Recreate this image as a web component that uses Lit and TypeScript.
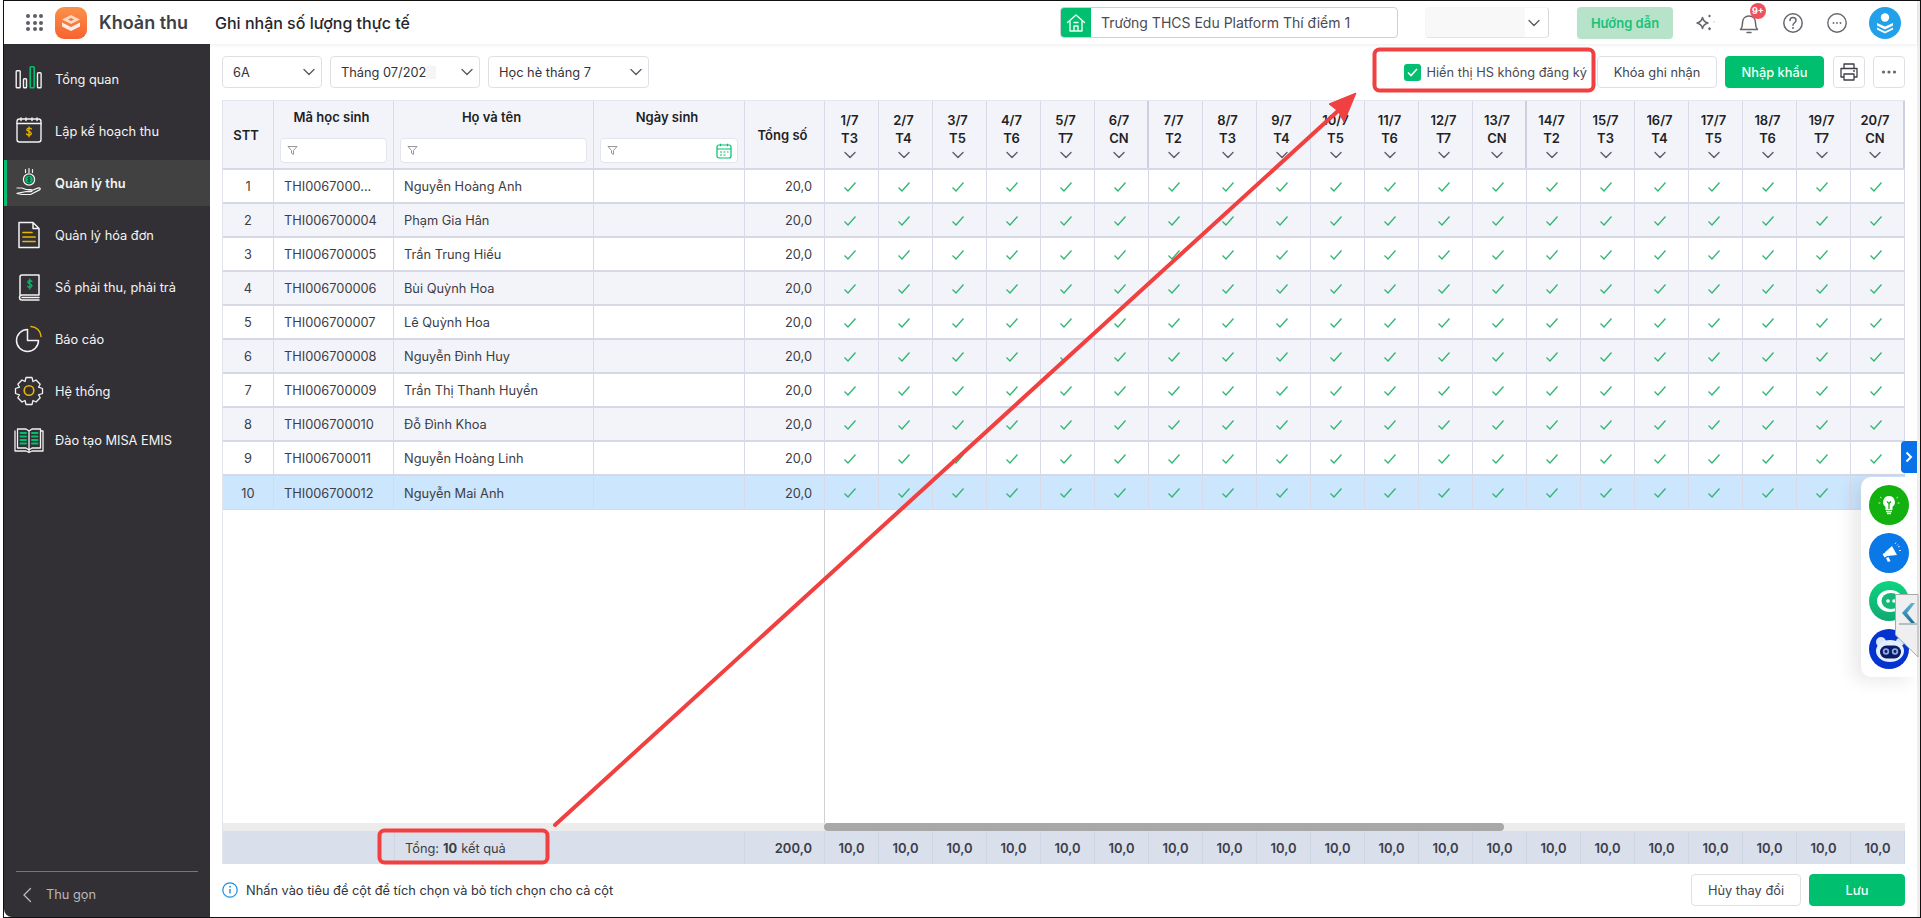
import { LitElement, html, css, svg } from 'lit';
import { customElement } from 'lit/decorators.js';

const WHITE = '#f2f2f2';
const GREEN = '#00bf6f';
const YELLOW = '#e9b500';

const stroke = (d: string, color = WHITE, w = 1.5) =>
  svg`<path d=${d} fill="none" stroke=${color} stroke-width=${w} stroke-linecap="round" stroke-linejoin="round"/>`;

const menu = [
  {
    label: 'Tổng quan',
    icon: svg`
      <rect x="3.2" y="7.7" width="4" height="17" rx=".8" fill="none" stroke=${WHITE} stroke-width="1.4"/>
      <rect x="10.500" y="15.7" width="3" height="9" rx=".8" fill="none" stroke=${WHITE} stroke-width="1.4"/>
      <rect x="17.200" y="3.7" width="4" height="21" rx=".8" fill="none" stroke=${GREEN} stroke-width="1.6"/>
      <rect x="24.500" y="9.7" width="3.6" height="15" rx=".8" fill="none" stroke=${WHITE} stroke-width="1.4"/>`,
  },
  {
    label: 'Lập kế hoạch thu',
    icon: svg`
      <rect x="4" y="4" width="24" height="23" rx="2.5" fill="none" stroke=${WHITE} stroke-width="1.4"/>
      ${stroke('M4 8.5H28M8 3v2.5M13 3v2.5M19 3v2.5M24 3v2.5')}
      ${stroke('M18.5 14c-.6-1-3.8-1.6-4.6.2-.9 2.3 4.6 2 4.4 4.4-.2 1.8-3.6 1.8-4.8.4M16 11.8v10', YELLOW, 1.3)}`,
  },
  {
    label: 'Quản lý thu',
    active: true,
    icon: svg`
      ${stroke('M12.5 2.5v3M16 1.5v4M19.5 2.5v3', WHITE, 1.2)}
      <circle cx="16" cy="12.5" r="5.6" fill="none" stroke=${WHITE} stroke-width="1.3"/>
      <circle cx="16" cy="12.5" r="3.8" fill=${GREEN}/>
      ${stroke('M17.300 11c-.4-.7-2.500-.8-2.600.4-.1 1.300 2.700 1 2.600 2.300-.1 1-2.200 1-2.800.2M16 9.800v5.400', '#1c3a2c', .9)}
      ${stroke('M4 21h5l4 1.5h5c1.5 0 1.5 2.2 0 2.2h-4M18.5 23.5l7-2.6c1.8-.4 2.4 1.2 1 2l-9 4.6H9l-5-1.2z', WHITE, 1.2)}`,
  },
  {
    label: 'Quản lý hóa đơn',
    icon: svg`
      ${stroke('M6 3.5h14l6 6v19H6zM20 3.5v6h6')}
      ${stroke('M10 13.5h9M10 18h12M10 22.5h12', YELLOW, 1.7)}`,
  },
  {
    label: 'Sổ phải thu, phải trả',
    icon: svg`
      ${stroke('M7 24V6a2 2 0 0 1 2-2h17v20H9a2.5 2.5 0 0 0 0 5h17M9 26.5h17')}
      ${stroke('M19 10.5c-.5-1-3.8-1.4-4.2.3-.5 2.2 4.4 1.8 4.2 4.2-.2 1.6-3.4 1.6-4.4.3M16.8 8v10', GREEN, 1.3)}`,
  },
  {
    label: 'Báo cáo',
    icon: svg`
      ${stroke('M14.5 6.5a11 11 0 1 0 11 11h-11z', WHITE, 1.5)}
      ${stroke('M18 3.5a10.5 10.5 0 0 1 10 10', YELLOW, 1.5)}`,
  },
  {
    label: 'Hệ thống',
    icon: svg`
      <path d="M13 2.5h6l1 4 3-1.5 4.200 4.200-1.700 3 4 1.300v5l-4 1.300 1.700 3-4.200 4.200-3-1.500-1 4h-6l-1-4-3 1.500-4.200-4.200 1.700-3-4-1.300v-5l4-1.300-1.700-3 4.200-4.200 3 1.500z" fill="none" stroke=${WHITE} stroke-width="1.3" stroke-linejoin="round"/>
      <circle cx="16" cy="15.500" r="4.800" fill="none" stroke=${YELLOW} stroke-width="1.600"/>`,
  },
  {
    label: 'Đào tạo MISA EMIS',
    last: true,
    icon: svg`
      ${stroke('M2 7v20h11l3 1.500 3-1.500h11V7h-2M16 7v21M4.500 5v19H13l3 2 3-2h8.500V5H19l-3 2-3-2z', WHITE, 1.300)}
      ${stroke('M7.500 9h5.500M7.500 12.500h5.500M7.500 16h5.500M7.500 19.500h5.500M19 9h5.500M19 12.500h5.500M19 16h5.500M19 19.500h5.500', GREEN, 2)}`,
  },
];

const students = [
  ['THI0067000...', 'Nguyễn Hoàng Anh'],
  ['THI006700004', 'Phạm Gia Hân'],
  ['THI006700005', 'Trần Trung Hiếu'],
  ['THI006700006', 'Bùi Quỳnh Hoa'],
  ['THI006700007', 'Lê Quỳnh Hoa'],
  ['THI006700008', 'Nguyễn Đình Huy'],
  ['THI006700009', 'Trần Thị Thanh Huyền'],
  ['THI006700010', 'Đỗ Đình Khoa'],
  ['THI006700011', 'Nguyễn Hoàng Linh'],
  ['THI006700012', 'Nguyễn Mai Anh'],
];

const weekdays = ['T3', 'T4', 'T5', 'T6', 'T7', 'CN', 'T2'];
const days = Array.from({ length: 20 }, (_, i) => ({
  date: `${i + 1}/7`,
  weekday: weekdays[i % 7],
}));

const chevron = html`<svg class="chev" width="12" height="8" viewBox="0 0 12 8"><path d="M1 1.500l5 5 5-5" fill="none" stroke="#5c5c66" stroke-width="1.400" stroke-linecap="round" stroke-linejoin="round"/></svg>`;
const funnel = html`<svg width="11" height="11" viewBox="0 0 11 11"><path d="M1 1.500h9L6.500 5.500v4l-2-1.300V5.500z" fill="none" stroke="#8b8b95" stroke-width=".9" stroke-linejoin="round"/></svg>`;
const tick = html`<svg width="14" height="12" viewBox="0 0 14 12"><path d="M1.500 6.500L5 10l7.500-8.500" fill="none" stroke="#30b673" stroke-width="1.300"/></svg>`;

@customElement('app-root')
export class AppRoot extends LitElement {
  static styles = css`
    :host {
      display: block;
      position: relative;
      width: 1921px;
      height: 918px;
      overflow: hidden;
      background: #fff;
      font-family: Inter, 'Noto Sans', sans-serif;
      font-size: 12.8px;
      color: #3d3d45;
    }
    * { box-sizing: border-box; }

    .window {
      height: 918px;
      margin-left: 3px;
      display: flex;
      flex-direction: column;
      border: 1px solid #111;
    }
    .window-inner {
      flex: 1;
      display: flex;
      flex-direction: column;
      min-height: 0;
      border-right: 3px solid #eeeeee;
    }

    /* header */
    .header {
      height: 43px;
      flex: none;
      display: flex;
      align-items: center;
      padding: 0 16px 0 22px;
      background: #fff;
      box-shadow: 0 1px 4px rgba(0, 0, 0, .08);
      position: relative;
    }
    .apps { display: grid; grid-template-columns: repeat(3, 4px); gap: 2.500px; margin-right: 12px; }
    .apps i { width: 4px; height: 4px; border-radius: 50%; background: #5e5e66; }
    .logo { width: 32px; height: 32px; margin-right: 12px; }
    .app-name { font-size: 18px; font-weight: 600; color: #3f3f46; width: 116px; }
    .page-title { font-size: 16px; font-weight: 500; color: #26262c; }
    .spacer { flex: 1; }
    .branch {
      width: 338px;
      height: 31px;
      display: flex;
      align-items: center;
      border: 1px solid #cfcfd4;
      border-radius: 4px;
      overflow: hidden;
      margin-right: 27px;
      font-size: 14px;
      color: #4a4a52;
    }
    .branch .house {
      width: 31px;
      height: 31px;
      background: #00bf6f;
      display: flex;
      align-items: center;
      justify-content: center;
      margin: -1px 10px -1px -1px;
    }
    .year {
      width: 124px;
      height: 31px;
      border: 1px solid;
      border-color: #f6f6f6 #d6d6da #e4e4e7 #f6f6f6;
      border-radius: 4px;
      margin-right: 28px;
      display: flex;
      align-items: center;
      overflow: hidden;
    }
    .year .blur { width: 99px; height: 100%; background: #f8f8f8; }
    .year .chev { margin-left: 3px; }
    .guide {
      width: 96px;
      height: 32px;
      border-radius: 4px;
      background: #b6e3ca;
      color: #1cc177;
      font-size: 13px;
      font-weight: 600;
      display: flex;
      align-items: center;
      justify-content: center;
      margin-right: 20px;
    }
    .tools { display: flex; gap: 20px; align-items: center; }
    .tool { width: 24px; height: 24px; position: relative; display: block; }
    .badge {
      position: absolute;
      top: -8px;
      left: 13px;
      width: 16px;
      height: 16px;
      border-radius: 50%;
      background: #f0505a;
      color: #fff;
      font-size: 9px;
      font-weight: 700;
      line-height: 15px;
      text-align: center;
    }
    .avatar { width: 32px; height: 32px; margin-left: 20px; }

    /* main */
    .main { flex: 1; display: flex; min-height: 0; }
    .side {
      width: 206px;
      flex: none;
      background: #323034;
      border-bottom-left-radius: 8px;
      padding: 12px 0 0;
      display: flex;
      flex-direction: column;
      gap: 6px;
    }
    .item {
      height: 46px;
      display: flex;
      align-items: center;
      gap: 10px;
      padding-left: 9px;
      color: #f4f4f4;
    }
    .item.active {
      background: #414141;
      box-shadow: inset 3px 0 0 #00bf6f;
      font-weight: 600;
    }
    .item.last { margin-top: -3px; }
    .collapse {
      margin: auto 12px 0;
      height: 46px;
      border-top: 1px solid #77767a;
      display: flex;
      align-items: center;
      gap: 14px;
      padding-left: 6px;
      color: #b9b8bb;
    }

    .content {
      flex: 1;
      min-width: 0;
      padding: 12px 12px 11px;
      display: flex;
      flex-direction: column;
    }
    .toolbar { height: 32px; display: flex; align-items: center; flex: none; gap: 8px; margin-bottom: 12px; }
    .select {
      height: 32px;
      border: 1px solid #dfe0e6;
      border-radius: 4px;
      display: flex;
      align-items: center;
      justify-content: space-between;
      padding: 0 6px 0 10px;
      background: #fff;
      color: #33333a;
    }
    .s1 { width: 100px; }
    .s2 { width: 150px; }
    .s3 { width: 161px; }
    .month i { display: inline-block; width: 10px; height: 13px; background: #f5f5f5; vertical-align: -2px; }
    .check { margin-left: auto; display: flex; align-items: center; gap: 5px; margin-right: 2px; color: #4a4a52; }
    .box {
      width: 17px;
      height: 17px;
      background: #00bf6f;
      border-radius: 3px;
      display: flex;
      align-items: center;
      justify-content: center;
    }
    .btn {
      height: 32px;
      border: 1px solid #dfe0e6;
      border-radius: 4px;
      background: #fff;
      display: flex;
      align-items: center;
      justify-content: center;
      color: #44444c;
    }
    .btn.primary { background: #00bf6f; border-color: #00bf6f; color: #f3fff9; font-weight: 500; }
    .lock { width: 120px; }
    .import { width: 99px; margin-right: 1px; }
    .square { width: 32px; }

    /* table */
    .table { flex: 1; min-height: 0; display: flex; flex-direction: column; border-left: 1px solid #e2e4ec; }
    .grid {
      display: grid;
      grid-template-columns: 51px 120px 200px 151px 80px repeat(20, 54px);
    }
    .head { height: 70px; flex: none; background: #f3f4f9; border-top: 1px solid #e4e5ee; border-bottom: 2px solid #d6d8e6; }
    .hc {
      border-right: 1px solid #d8dae8;
      display: flex;
      flex-direction: column;
      align-items: center;
      font-size: 13px;
      font-weight: 600;
      color: #1f1f25;
      padding-top: 7px;
      line-height: 18px;
    }
    .hc > span { margin-right: 4px; }
    .hc.mid { justify-content: center; padding-top: 0; }
    .hc.sunday { border-right: 2px solid #cdd0e0; }
    .hc .chev { margin: 4px 4px 0 0; }
    .filter {
      width: calc(100% - 12px);
      height: 25px;
      margin-top: 12px;
      background: #fff;
      border: 1px solid #e4e5ec;
      border-radius: 4px;
      display: flex;
      align-items: center;
      justify-content: space-between;
      padding: 0 5px 0 6px;
    }
    .hc.day { padding-top: 10px; }
    .row { height: 34px; flex: none; border-bottom: 2px solid #d6d8e6; background: #fff; }
    .row.odd { background: #f3f4f9; }
    .row.selected { background: #cce6fd; border-bottom: 1px solid #d3dcea; }
    .cell {
      border-right: 1px solid #d8dae8;
      display: flex;
      align-items: center;
      padding: 1px 10px 0;
      overflow: hidden;
      white-space: nowrap;
    }
    .center { justify-content: center; padding: 1px 0 0; }
    .row .tick { padding-right: 4px; }
    .right { justify-content: flex-end; padding-right: 12px; }
    .filler { flex: 1; min-height: 0; }
    .filler div { width: 602px; height: 100%; border-right: 1px solid #cfcfd4; }
    .scroll { height: 8px; flex: none; display: flex; background: #ececec; }
    .scroll i { display: block; width: 680px; margin-left: 601px; border-radius: 4px; background: #a8a8a8; }
    .foot { height: 33px; flex: none; background: #d9e0ec; font-size: 13px; font-weight: 600; color: #3d3d45; }
    .foot .cell { border-right: 1px solid #cfd7e5; }
    .foot .wide { grid-column: span 2; border-right: none; }
    .foot .total { grid-column: span 2; font-size: 12.8px; font-weight: 400; border-left: 1px solid #cfd7e5; gap: 4px; }
    .foot .total b { font-weight: 700; }

    .bottom { height: 32px; margin-top: 10px; flex: none; display: flex; align-items: center; gap: 8px; }
    .bottom .note { color: #33333a; display: flex; align-items: center; gap: 8px; margin-right: auto; }
    .cancel { width: 110px; }
    .save { width: 96px; }

    /* float widgets */
    .tab {
      position: absolute;
      left: 1901px;
      top: 441px;
      width: 16px;
      height: 32px;
      background: #0a72e8;
      border-radius: 4px 0 0 4px;
      display: flex;
      align-items: center;
      justify-content: center;
    }
    .dock {
      position: absolute;
      left: 1861px;
      top: 477px;
      width: 56px;
      height: 200px;
      background: #fff;
      border-radius: 10px 0 0 10px;
      box-shadow: -8px 4px 18px rgba(0, 0, 0, .09);
      display: flex;
      flex-direction: column;
      align-items: center;
      gap: 8px;
      padding-top: 8px;
    }
    .dock svg { display: block; }
    .peel { position: absolute; left: 1895px; top: 594px; }
    .marks { position: absolute; left: 0; top: 0; pointer-events: none; }
  `;

  render() {
    return html`
      <div class="window"><div class="window-inner">
        <header class="header">
          <div class="apps">${Array.from({ length: 9 }, () => html`<i></i>`)}</div>
          <svg class="logo" viewBox="0 0 32 32">
            <defs><linearGradient id="lg" x1="0" y1="0" x2="0" y2="1"><stop offset="0" stop-color="#f9924a"/><stop offset="1" stop-color="#f9622f"/></linearGradient></defs>
            <rect width="32" height="32" rx="9" fill="url(#lg)"/>
            <path d="M16 8l9 4.500-9 4.500-9-4.500z" fill="#fbd9c1"/>
            <path d="M7 15.500l9 4.500 9-4.500v4l-9 4.500-9-4.500z" fill="#fff" opacity=".88"/>
            <path d="M13 12.500l3-1.500 3 1.500-3 1.500z" fill="#f9713a"/>
          </svg>
          <div class="app-name">Khoản thu</div>
          <div class="page-title">Ghi nhận số lượng thực tế</div>
          <div class="spacer"></div>
          <div class="branch">
            <span class="house">
              <svg width="20" height="20" viewBox="0 0 20 20"><path d="M1.500 9.500L10 2l8.500 7.500M4 8v10h12V8M8 18v-5h4v5M8 9.500h4" fill="none" stroke="#eafff4" stroke-width="1.400" stroke-linejoin="round" stroke-linecap="round"/></svg>
            </span>
            Trường THCS Edu Platform Thí điểm 1
          </div>
          <div class="year"><span class="blur"></span>${chevron}</div>
          <div class="guide">Hướng dẫn</div>
          <div class="tools">
            <svg class="tool" viewBox="0 0 24 24">
              <path d="M9.500 6.500c.8 3.500 2 4.700 5.500 5.500-3.500.8-4.700 2-5.500 5.500C8.700 14 7.500 12.800 4 12c3.500-.8 4.700-2 5.500-5.500z" fill="none" stroke="#66666e" stroke-width="1.500" stroke-linejoin="round"/>
              <path d="M16.500 3.500l1.500 1.500-1.500 1.500L15 5zM16.500 16l1.700 1.700-1.700 1.700-1.700-1.700z" fill="#66666e"/>
              <circle cx="21" cy="11" r=".7" fill="#bbb"/>
            </svg>
            <span class="tool">
              <svg width="24" height="24" viewBox="0 0 24 24"><path d="M3.500 18.500c1.500-1.500 2-3 2-6.500 0-4 2.500-7 6.500-7s6.500 3 6.500 7c0 3.500.5 5 2 6.500zM10 21.500h4" fill="none" stroke="#66666e" stroke-width="1.500" stroke-linejoin="round" stroke-linecap="round"/></svg>
              <span class="badge">9+</span>
            </span>
            <svg class="tool" viewBox="0 0 24 24">
              <circle cx="12" cy="12" r="9.200" fill="none" stroke="#66666e" stroke-width="1.500"/>
              <path d="M9 9.500c0-4 6-4 6 0 0 2.300-3 2.300-3 4.800" fill="none" stroke="#66666e" stroke-width="1.500" stroke-linecap="round"/>
              <circle cx="12" cy="17" r="1" fill="#66666e"/>
            </svg>
            <svg class="tool" viewBox="0 0 24 24">
              <circle cx="12" cy="12" r="9.200" fill="none" stroke="#66666e" stroke-width="1.400"/>
              <circle cx="8.500" cy="12" r=".9" fill="#66666e"/><circle cx="12" cy="12" r=".9" fill="#66666e"/><circle cx="15.500" cy="12" r=".9" fill="#66666e"/>
            </svg>
          </div>
          <svg class="avatar" viewBox="0 0 32 32">
            <circle cx="16" cy="16" r="16" fill="#22a0ea"/>
            <circle cx="16" cy="10.500" r="4.200" fill="#fff"/>
            <path d="M8 16l8 3.500 8-3.500v2.500l-8 4-8-4zM8 20.500l8 4 8-4v2l-8 4-8-4z" fill="#fff"/>
          </svg>
        </header>

        <div class="main">
          <nav class="side">
            ${menu.map(
              (m) => html`
                <div class="item ${m.active ? 'active' : ''} ${m.last ? 'last' : ''}">
                  <svg width="32" height="32" viewBox="0 0 32 32">${m.icon}</svg>
                  <span>${m.label}</span>
                </div>`
            )}
            <div class="collapse">
              <svg width="10" height="16" viewBox="0 0 10 16"><path d="M8.500 1.500L2 8l6.500 6.500" fill="none" stroke="#b9b8bb" stroke-width="1.300" stroke-linecap="round"/></svg>
              Thu gọn
            </div>
          </nav>

          <section class="content">
            <div class="toolbar">
              <div class="select s1"><span>6A</span>${chevron}</div>
              <div class="select s2"><span class="month">Tháng 07/202<i></i></span>${chevron}</div>
              <div class="select s3"><span>Học hè tháng 7</span>${chevron}</div>
              <div class="check">
                <span class="box"><svg width="11" height="9" viewBox="0 0 11 9"><path d="M1 4.500l3 3 6-6.500" fill="none" stroke="#fff" stroke-width="1.600"/></svg></span>
                Hiển thị HS không đăng ký
              </div>
              <div class="btn lock">Khóa ghi nhận</div>
              <div class="btn primary import">Nhập khẩu</div>
              <div class="btn square">
                <svg width="20" height="20" viewBox="0 0 20 20"><path d="M5 6.500V2h10v4.500M5 15H2V6.500h16V15h-3M5 12h10v6H5z" fill="none" stroke="#3d3d45" stroke-width="1.300" stroke-linejoin="round"/><circle cx="15" cy="9" r=".9" fill="#3d3d45"/></svg>
              </div>
              <div class="btn square">
                <svg width="16" height="6" viewBox="0 0 16 6"><circle cx="2.500" cy="3" r="1.600" fill="#66666e"/><circle cx="8" cy="3" r="1.600" fill="#66666e"/><circle cx="13.500" cy="3" r="1.600" fill="#66666e"/></svg>
              </div>
            </div>

            <div class="table">
              <div class="grid head">
                <div class="hc mid"><span>STT</span></div>
                <div class="hc"><span>Mã học sinh</span><div class="filter">${funnel}</div></div>
                <div class="hc"><span>Họ và tên</span><div class="filter">${funnel}</div></div>
                <div class="hc"><span>Ngày sinh</span>
                  <div class="filter">
                    ${funnel}
                    <svg width="16" height="16" viewBox="0 0 16 16"><rect x="1" y="2" width="14" height="13" rx="2" fill="none" stroke="#00bf6f" stroke-width="1.200"/><path d="M1 6h14M4.500 .8v2.500M11.500 .8v2.500M4 9h2M7.500 9h2M11 9h1.500M4 12h2M7.500 12h2" fill="none" stroke="#00bf6f" stroke-width="1.200"/></svg>
                  </div>
                </div>
                <div class="hc mid"><span>Tổng số</span></div>
                ${days.map(
                  (d) => html`
                    <div class="hc day ${d.weekday === 'CN' ? 'sunday' : ''}">
                      <span>${d.date}</span><span>${d.weekday}</span>${chevron}
                    </div>`
                )}
              </div>

              ${students.map(
                (s, i) => html`
                  <div class="grid row ${i % 2 ? 'odd' : ''} ${i === 9 ? 'selected' : ''}">
                    <div class="cell center">${i + 1}</div>
                    <div class="cell">${s[0]}</div>
                    <div class="cell">${s[1]}</div>
                    <div class="cell"></div>
                    <div class="cell right">20,0</div>
                    ${days.map(() => html`<div class="cell center tick">${tick}</div>`)}
                  </div>`
              )}

              <div class="filler"><div></div></div>
              <div class="scroll"><i></i></div>
              <div class="grid foot">
                <div class="cell wide"></div>
                <div class="cell total">Tổng: <b>10</b> kết quả</div>
                <div class="cell right">200,0</div>
                ${days.map(() => html`<div class="cell center">10,0</div>`)}
              </div>
            </div>

            <div class="bottom">
              <div class="note">
                <svg width="16" height="16" viewBox="0 0 16 16"><circle cx="8" cy="8" r="7.200" fill="none" stroke="#1a8fe3" stroke-width="1.200"/><path d="M8 7v4.500" stroke="#1a8fe3" stroke-width="1.400"/><circle cx="8" cy="4.700" r=".9" fill="#1a8fe3"/></svg>
                Nhấn vào tiêu đề cột để tích chọn và bỏ tích chọn cho cả cột
              </div>
              <div class="btn cancel">Hủy thay đổi</div>
              <div class="btn primary save">Lưu</div>
            </div>
          </section>
        </div>
      </div></div>

      <div class="tab">
        <svg width="8" height="12" viewBox="0 0 8 12"><path d="M1.500 1.500L6 6l-4.500 4.500" fill="none" stroke="#fff" stroke-width="2"/></svg>
      </div>
      <div class="dock">
        <svg width="40" height="40" viewBox="0 0 40 40">
          <circle cx="20" cy="20" r="20" fill="#13b10f"/>
          <path d="M20 11a6 6 0 0 0-3.500 10.800V25h7v-3.200A6 6 0 0 0 20 11z" fill="#fff"/>
          <path d="M17 26.500h6M18 28.500h4" stroke="#fff" stroke-width="1.300"/>
          <path d="M20 24v-6M18 16.500l2 2 2-2" fill="none" stroke="#13b10f" stroke-width="1.300"/>
          <path d="M11 12l1.500 1M29 12l-1.500 1M9.500 18h1.800M28.700 18h1.800" stroke="#cdf5cc" stroke-width="1"/>
        </svg>
        <svg width="40" height="40" viewBox="0 0 40 40">
          <circle cx="20" cy="20" r="20" fill="#0a78e6"/>
          <path d="M23 13l5 9-9.500 1-2.500-3.800z" fill="#fff"/>
          <path d="M13.500 21l3.500-1.800 2 3.300-3.500 2zM17 25l2.500-1 2 4-2.600 1z" fill="#fff"/>
          <path d="M26 11l1-1.500M29 14l1.800-.7M30 17.500h2M28 12.500l1-1" stroke="#cde4fb" stroke-width="1"/>
        </svg>
        <svg width="40" height="40" viewBox="0 0 40 40">
          <defs><linearGradient id="gb" x1="0" y1="0" x2="0" y2="1"><stop offset="0" stop-color="#0dd57f"/><stop offset="1" stop-color="#10a971"/></linearGradient></defs>
          <circle cx="20" cy="20" r="20" fill="url(#gb)"/>
          <ellipse cx="21" cy="20" rx="13" ry="11" fill="#fff"/>
          <ellipse cx="22" cy="20" rx="9.500" ry="8" fill="#14b978"/>
          <circle cx="19" cy="20" r="1.800" fill="#fff"/><circle cx="25" cy="20" r="1.800" fill="#fff"/>
        </svg>
        <svg width="40" height="40" viewBox="0 0 40 40">
          <circle cx="20" cy="20" r="20" fill="#0433cf"/>
          <circle cx="12" cy="13" r="5" fill="#d8e6ff"/><circle cx="31" cy="13" r="4" fill="#d8e6ff"/>
          <ellipse cx="21" cy="22" rx="14" ry="11" fill="#e6efff"/>
          <rect x="11" y="16.500" width="21" height="13" rx="6.500" fill="#0c1c64"/>
          <circle cx="17" cy="22.500" r="3.200" fill="#8fa6e8"/><circle cx="26" cy="22.500" r="3.200" fill="#8fa6e8"/>
          <circle cx="17" cy="22.500" r="1.400" fill="#0c1c64"/><circle cx="26" cy="22.500" r="1.400" fill="#0c1c64"/>
        </svg>
      </div>
      <svg class="peel" width="26" height="66" viewBox="0 0 26 66">
        <defs><linearGradient id="pl" x1="0" y1="0" x2="0" y2="1"><stop offset="0" stop-color="#5fb4dc"/><stop offset="1" stop-color="#1d6f9c"/></linearGradient></defs>
        <path d="M.5.500H23V63L.5 41z" fill="#efefef" stroke="#a8a8a8" stroke-width="1"/>
        <path d="M16 9L7 19l9 10h4l-8-10 8-10z" fill="url(#pl)"/>
        <path d="M4 30h18" stroke="#7b8b96" stroke-width="1"/>
      </svg>

      <svg class="marks" width="1921" height="918" viewBox="0 0 1921 918">
        <g fill="none" stroke="#f04040" stroke-width="4">
          <rect x="1374.500" y="49.500" width="219" height="41" rx="5"/>
          <rect x="379.500" y="830.500" width="168" height="32" rx="5"/>
        </g>
        <path d="M555 825L1339 110" stroke="#f04040" stroke-width="4" stroke-linecap="round"/>
        <path d="M1356 93L1329 104L1338 111L1344 122z" fill="#f04040" stroke="#f04040" stroke-linejoin="round"/>
      </svg>
    `;
  }
}
